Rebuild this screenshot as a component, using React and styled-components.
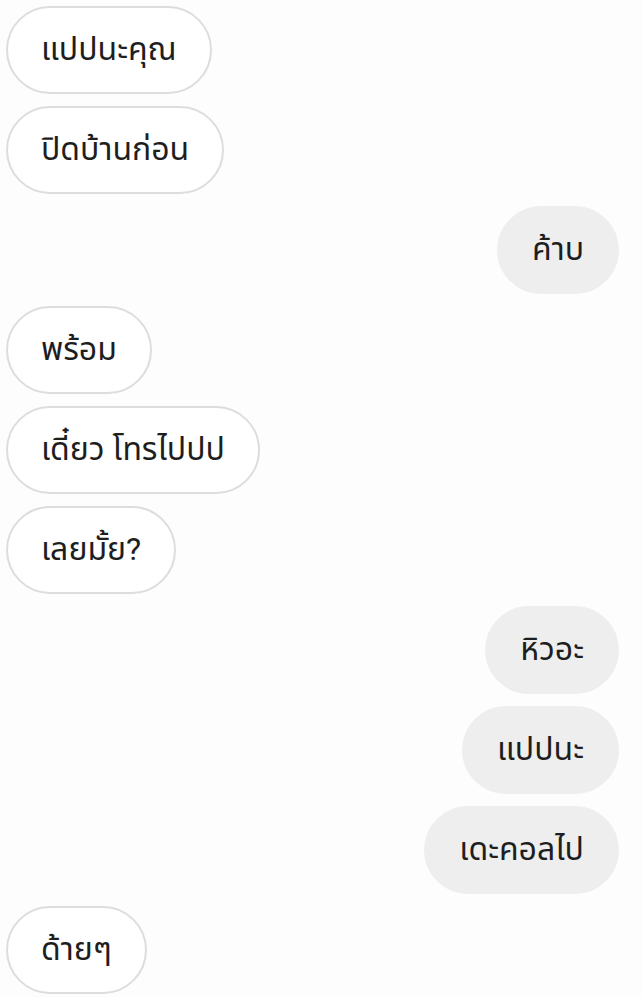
import React from 'react';
import styled, { createGlobalStyle } from 'styled-components';

const GlobalStyle = createGlobalStyle`
  body {
    margin: 0;
    background: #fdfdfd;
    font-family: Roboto, "Noto Sans Thai", "Noto Sans", sans-serif;
  }
`;

const Thread = styled.div`
  display: flex;
  flex-direction: column;
  gap: 12px;
  padding: 6px 24px 6px 6px;
`;

const Bubble = styled.div`
  align-self: ${(p) => (p.$mine ? 'flex-end' : 'flex-start')};
  box-sizing: border-box;
  height: 88px;
  display: flex;
  align-items: center;
  padding: 0 33px;
  border-radius: 44px;
  font-size: 32px;
  color: #1e1e1e;
  background: ${(p) => (p.$mine ? '#eeeeee' : '#ffffff')};
  border: 2px solid ${(p) => (p.$mine ? '#eeeeee' : '#dddddd')};
`;

const messages = [
  { text: 'แปปนะคุณ' },
  { text: 'ปิดบ้านก่อน' },
  { text: 'ค้าบ', mine: true },
  { text: 'พร้อม' },
  { text: 'เดี๋ยว โทรไปปป' },
  { text: 'เลยมั้ย?' },
  { text: 'หิวอะ', mine: true },
  { text: 'แปปนะ', mine: true },
  { text: 'เดะคอลไป', mine: true },
  { text: 'ด้ายๆ' },
];

export default function App() {
  return (
    <>
      <GlobalStyle />
      <Thread>
        {messages.map((m, i) => (
          <Bubble key={i} $mine={m.mine}>
            {m.text}
          </Bubble>
        ))}
      </Thread>
    </>
  );
}
